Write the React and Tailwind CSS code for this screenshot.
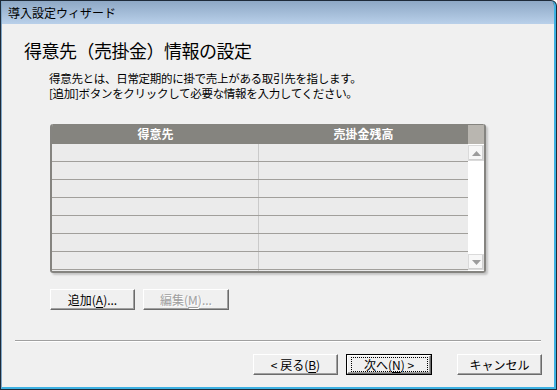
const JP = { fontFamily: "'Noto Sans CJK JP', 'Noto Sans', sans-serif" };

function WinButton({ children, disabled, isDefault, className = "" }) {
  const face = (
    <div
      className={
        "flex h-full w-full items-center justify-center border border-t-white border-l-white border-r-[#6b6b6b] border-b-[#6b6b6b] bg-[#f0f0f0] shadow-[inset_-1px_-1px_0_#a0a0a0] text-[12px] leading-none " +
        (disabled ? "text-[#a0a0a0] [text-shadow:1px_1px_0_#fff]" : "text-black")
      }
    >
      {isDefault ? (
        <span className="flex h-[15px] w-[77px] items-center justify-center border border-dotted border-black">
          {children}
        </span>
      ) : (
        children
      )}
    </div>
  );
  return (
    <div className={"h-[21px] " + (isDefault ? "border border-black " : "") + className}>
      {face}
    </div>
  );
}

function TableRow() {
  return (
    <div className="flex h-[18px] shrink-0 border-b border-[#a19f9b]">
      <div className="w-[207px] border-r border-[#cacaca] bg-[#ebebeb]" />
      <div className="flex-1 bg-[#ebebeb]" />
    </div>
  );
}

function ScrollArrow({ up }) {
  return (
    <div className="flex h-[16px] w-[16px] items-center justify-center border border-[#dadada] bg-[#f7f7f7] shadow-[inset_-1px_-1px_0_#d0d0d0]">
      <svg width="9" height="5" viewBox="0 0 9 5">
        {up ? (
          <polygon points="0,5 9,5 4.5,0" fill="#9c9c9c" />
        ) : (
          <polygon points="0,0 9,0 4.5,5" fill="#9c9c9c" />
        )}
      </svg>
    </div>
  );
}

export default function App() {
  return (
    <div
      className="flex h-[390px] w-[557px] flex-col overflow-hidden rounded-tr-[6px] bg-[#1e2a38] pl-px pt-px pb-px pr-px"
      style={JP}
    >
      <div className="flex flex-1 flex-col border-l border-[#7fa6c8] border-r-2 border-r-[#3db1e2] border-b-2 border-b-[#3db1e2] rounded-tr-[5px] overflow-hidden">
        {/* title bar */}
        <div className="flex h-[23px] shrink-0 items-center bg-gradient-to-b from-[#8ea8c5] to-[#b9d0ea] pl-[6px] text-[12px] text-black">
          導入設定ウィザード
        </div>

        {/* body */}
        <div className="flex flex-1 flex-col bg-[#f0f0f0]">
          <div className="mt-[14px] ml-[22px] h-[24px] text-[18px] leading-[24px] tracking-[-0.5px] text-black">
            得意先（売掛金）情報の設定
          </div>

          <div className="mt-[9px] ml-[47px] text-[11.5px] leading-[15px] tracking-[-0.3px] text-black">
            <div className="h-[15px]">得意先とは、日常定期的に掛で売上がある取引先を指します。</div>
            <div className="h-[15px]">[追加]ボタンをクリックして必要な情報を入力してください。</div>
          </div>

          {/* table */}
          <div className="mt-[23px] ml-[48px] flex h-[149px] w-[436px] flex-col overflow-hidden rounded-[3px] border-x-2 border-b-2 border-[#858480] shadow-[2px_2px_2px_rgba(0,0,0,0.18)]">
            <div className="flex h-[20px] shrink-0 bg-[#85847f] text-[12px] font-bold text-white">
              <div className="flex w-[207px] items-center justify-center">得意先</div>
              <div className="flex flex-1 items-center justify-center">売掛金残高</div>
              <div className="mt-px w-[16px] bg-[#b9b6b0]" />
            </div>
            <div className="flex flex-1 overflow-hidden">
              <div className="flex flex-1 flex-col">
                <TableRow />
                <TableRow />
                <TableRow />
                <TableRow />
                <TableRow />
                <TableRow />
                <TableRow />
                <TableRow />
              </div>
              <div className="flex w-[16px] flex-col justify-between bg-white pt-px pb-px">
                <ScrollArrow up />
                <ScrollArrow />
              </div>
            </div>
          </div>

          {/* add / edit */}
          <div className="mt-[16px] ml-[48px] flex gap-[8px]">
            <WinButton className="w-[85px]">
              追加(<span className="underline underline-offset-2">A</span>)...
            </WinButton>
            <WinButton className="w-[86px]" disabled>
              編集(<span className="underline underline-offset-2">M</span>)...
            </WinButton>
          </div>

          {/* separator */}
          <div className="mt-[30px] ml-[13px] w-[526px] border-t border-b border-t-[#a0a0a0] border-b-white" />

          {/* wizard buttons */}
          <div className="mt-[12px] mr-[12px] flex justify-end">
            <WinButton className="w-[85px]">
              &lt; 戻る(<span className="underline underline-offset-2">B</span>)
            </WinButton>
            <WinButton className="ml-[8px] w-[86px]" isDefault>
              次へ(<span className="underline underline-offset-2">N</span>) &gt;
            </WinButton>
            <WinButton className="ml-[25px] w-[85px]">キャンセル</WinButton>
          </div>
        </div>
      </div>
    </div>
  );
}
